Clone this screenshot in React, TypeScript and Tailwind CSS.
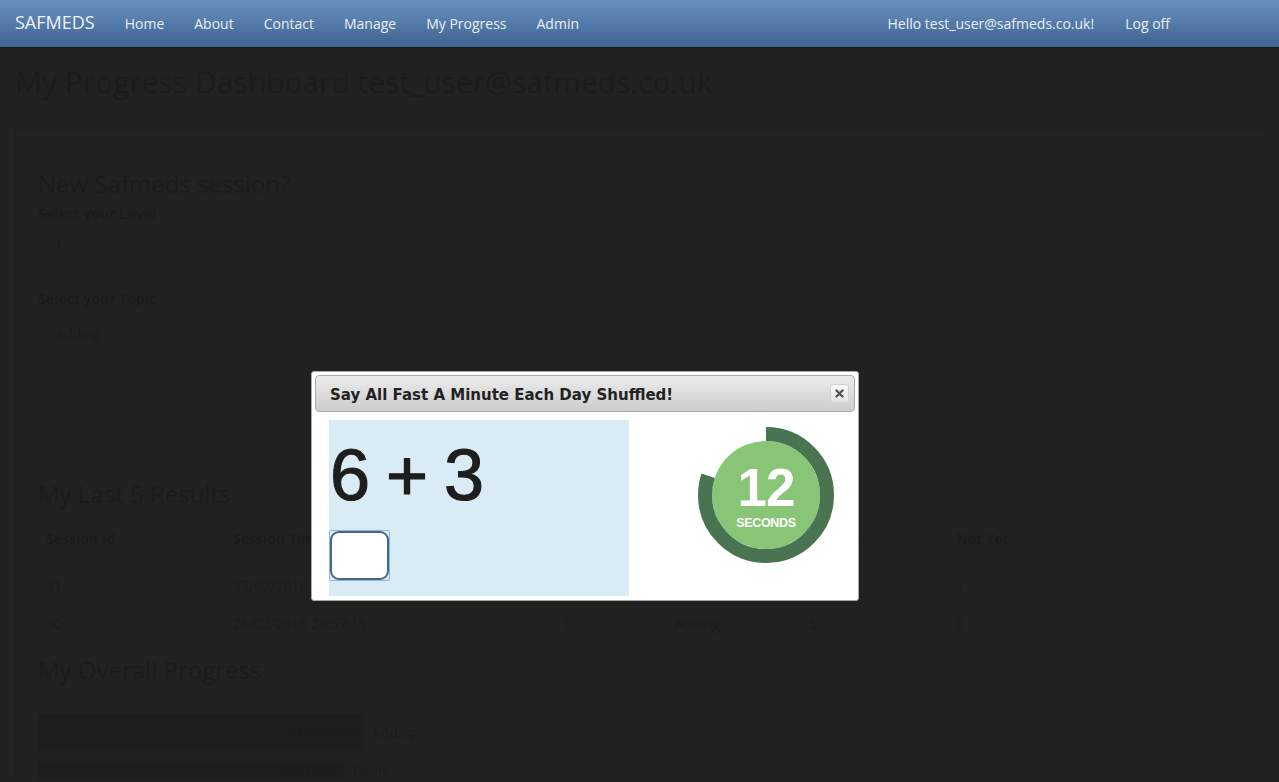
import React from "react";

const navLinks = ["Home", "About", "Contact", "Manage", "My Progress", "Admin"];

const resultCols = "grid grid-cols-[187px_329px_112px_135px_147px_150px] pl-[8px]";

function Timer() {
  // ring shows 48 of 60 seconds gone, gap is what's left
  const r = 61;
  const c = 2 * Math.PI * r;
  return (
    <div className="relative w-[136px] h-[136px]">
      <svg width="136" height="136" viewBox="0 0 136 136" className="absolute inset-0">
        <circle cx="68" cy="68" r="54" fill="#88c576" />
        <circle
          cx="68"
          cy="68"
          r={r}
          fill="none"
          stroke="#487451"
          strokeWidth="14"
          strokeDasharray={`${c * 0.8} ${c}`}
          transform="rotate(-90 68 68)"
        />
      </svg>
      <div className="absolute inset-0 flex flex-col items-center text-white font-['Liberation_Sans',Arial,sans-serif]">
        <p className="text-[53px] leading-[48px] font-bold mt-[37px] tracking-[-1px]">12</p>
        <p className="text-[12.5px] leading-[14px] mt-[4px] font-bold tracking-[-0.3px]">SECONDS</p>
      </div>
    </div>
  );
}

function SafmedsDialog() {
  return (
    <div className="absolute left-[311px] top-[371px] w-[548px] h-[230px] bg-white border border-[#a8a8a8] rounded-[3px] p-[3px]">
      {/* title bar */}
      <div className="h-[37px] flex items-center justify-between border border-[#aaaaaa] rounded-[4px] bg-gradient-to-b from-[#ececec] to-[#cdcdcd] pl-[14px] pr-[5px]">
        <p className="text-[15px] font-bold text-[#222222] mt-[3px] font-['DejaVu_Sans',Verdana,sans-serif]">
          Say All Fast A Minute Each Day Shuffled!
        </p>
        <button className="w-[19px] h-[19px] flex items-center justify-center rounded-[3px] border border-[#d3d3d3] bg-gradient-to-b from-[#f8f8f8] to-[#e3e3e3]">
          <svg width="9" height="9" viewBox="0 0 9 9">
            <path d="M1.5 1.5 L7.5 7.5 M7.5 1.5 L1.5 7.5" stroke="#555555" strokeWidth="2.4" strokeLinecap="round" />
          </svg>
        </button>
      </div>

      {/* body */}
      <div className="flex pl-[14px] pt-[8px]">
        <div className="w-[300px] h-[176px] bg-[#d9ecf5] flex flex-col">
          <p className="text-[72px] leading-[72px] mt-[19px] pl-[1px] text-[#1e1e1e] tracking-[-2px] [-webkit-text-stroke:1.2px_#1e1e1e] font-['Liberation_Sans',Arial,sans-serif]">
            6 + 3
          </p>
          <div className="mt-[19px] w-[61px] h-[51px] border border-[#8cb6ea] rounded-[2px]">
            <input className="w-full h-full bg-white border-2 border-[#4a6684] rounded-[9px] outline-none" />
          </div>
        </div>
        <div className="pt-[7px] pl-[69px]">
          <Timer />
        </div>
      </div>
    </div>
  );
}

export default function App() {
  return (
    <div className="relative w-[1279px] h-[782px] overflow-hidden bg-[#222122] font-['Open_Sans',sans-serif]">
      {/* top navbar */}
      <header className="h-[48px] flex items-center justify-between bg-gradient-to-b from-[#6a92c0] to-[#3d6390] border-b border-[#1b1b1b] pr-[94px] text-[#e9eef5]">
        <div className="flex items-center">
          <p className="pl-[15px] pr-[15px] text-[18px] text-[#eef2f7] -mt-[2px]">SAFMEDS</p>
          <nav className="flex items-center">
            {navLinks.map((l) => (
              <a key={l} className="px-[15px] text-[14px]">
                {l}
              </a>
            ))}
          </nav>
        </div>
        <div className="flex items-center text-[14px]">
          <a className="px-[15px] pr-[16px]">Hello test_user@safmeds.co.uk!</a>
          <a className="px-[15px]">Log off</a>
        </div>
      </header>

      {/* dimmed page behind the dialog */}
      <main className="px-[15px] text-[#1c1b1c]">
        <h1 className="text-[30px] mt-[14px] leading-[40px]">My Progress Dashboard test_user@safmeds.co.uk</h1>
        <div className="mt-[26px] border-t border-[#1f1e1f]" />
        <div className="border-l border-[#1f1e1f] pl-[22px] pt-[40px]">
          <h2 className="text-[24px] leading-[30px]">New Safmeds session?</h2>
          <p className="text-[14px] font-bold mt-[4px]">Select your Level</p>
          <div className="mt-[8px] w-[250px] h-[28px] border border-[#201f20] rounded-[3px] pl-[16px] text-[14px] leading-[26px]">1</div>
          <p className="text-[14px] font-bold mt-[28px]">Select your Topic</p>
          <div className="mt-[10px] w-[250px] h-[30px] border border-[#201f20] rounded-[3px] pl-[16px] text-[14px] leading-[28px]">Adding</div>

          <h2 className="text-[24px] leading-[30px] mt-[130px]">My Last 5 Results</h2>
          <div className="mt-[19px] text-[14px]">
            <div className={`${resultCols} font-bold`}>
              <span>Session Id</span>
              <span>Session Time</span>
              <span>Level</span>
              <span>Topic</span>
              <span>Correct</span>
              <span>Not Yet</span>
            </div>
            <div className={`${resultCols} mt-[26px]`}>
              <span>31</span>
              <span>27/02/2016 08:12:40</span>
              <span>1</span>
              <span>Adding</span>
              <span>4</span>
              <span>1</span>
            </div>
            <div className={`${resultCols} mt-[17px]`}>
              <span>30</span>
              <span>26/02/2016 20:57:15</span>
              <span>1</span>
              <span>Adding</span>
              <span>5</span>
              <span>0</span>
            </div>
          </div>

          <h2 className="text-[24px] leading-[30px] mt-[21px]">My Overall Progress</h2>
          <div className="mt-[29px] flex items-center gap-[8px]">
            <div className="w-[326px] h-[37px] bg-[#1f1e1f] flex items-center justify-end pr-[6px] text-[14px]">1729 (84%)</div>
            <span className="text-[14px]">Adding</span>
          </div>
          <div className="mt-[10px] flex items-start gap-[8px]">
            <div className="w-[306px] h-[20px] bg-[#1f1e1f] flex items-center justify-end pr-[6px] text-[12px] leading-[20px]">1630 (79%)</div>
            <span className="text-[12px] leading-[20px]">Taking</span>
          </div>
        </div>
      </main>

      <SafmedsDialog />
    </div>
  );
}
